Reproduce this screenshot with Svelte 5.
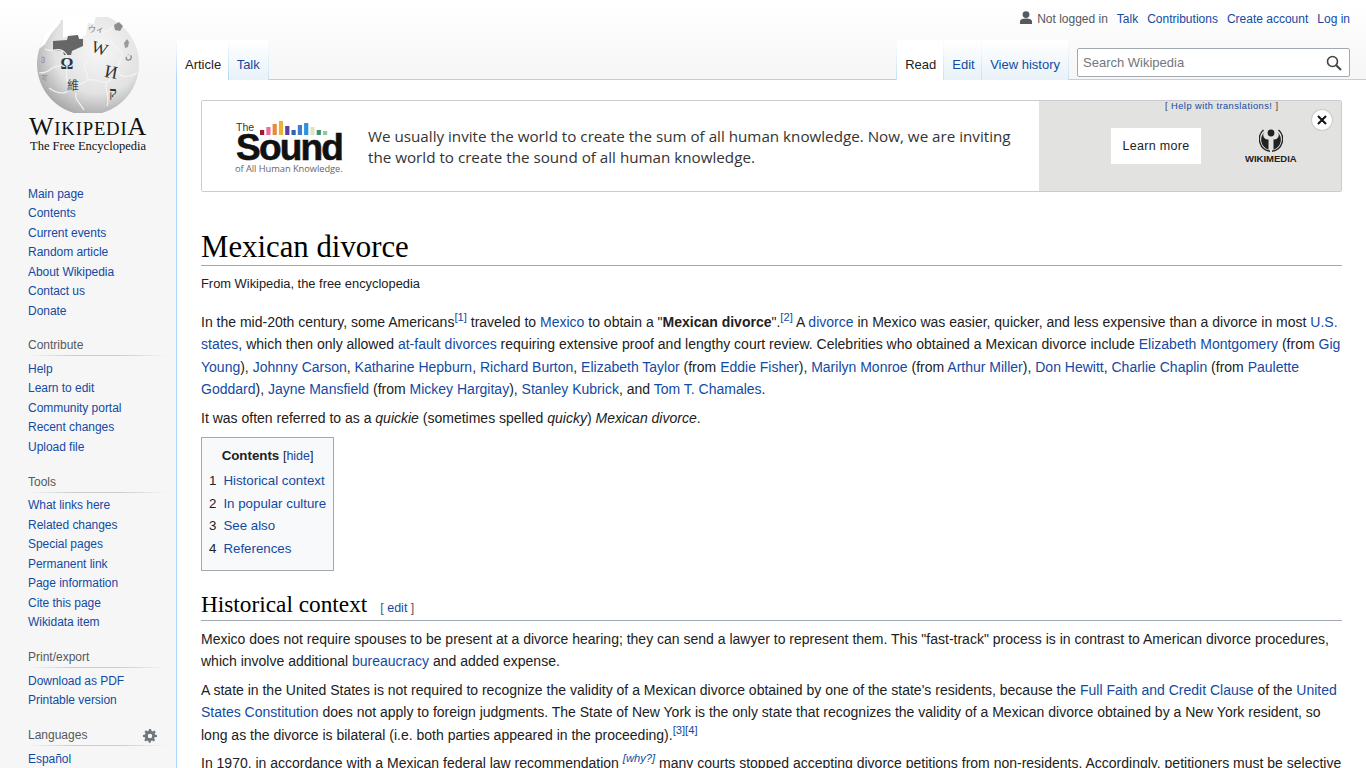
<script>
  const navs = [
    { title: '', items: ['Main page','Contents','Current events','Random article','About Wikipedia','Contact us','Donate'] },
    { title: 'Contribute', items: ['Help','Learn to edit','Community portal','Recent changes','Upload file'] },
    { title: 'Tools', items: ['What links here','Related changes','Special pages','Permanent link','Page information','Cite this page','Wikidata item'] },
    { title: 'Print/export', items: ['Download as PDF','Printable version'] },
    { title: 'Languages', gear: true, items: ['Español'] }
  ];
  const bars = [[5,'#9b1c2e'],[8,'#e76f9a'],[11,'#e98a3a'],[14,'#e9b23a'],[9,'#5b3f9e'],[5,'#3b5ea8'],[10,'#3b7fd0'],[12,'#2f8fe0'],[8,'#dfe3c8'],[5,'#3f8f6f'],[4,'#8fc9a8']];
  const toc = ['Historical context','In popular culture','See also','References'];
</script>

<div class="page">
  <aside class="side">
    <div class="logo">
      <svg class="globe" width="104" height="96" viewBox="0 0 104 96">
        <defs>
          <radialGradient id="g" cx="0.6" cy="0.36" r="0.72">
            <stop offset="0" stop-color="#f7f7f7"/><stop offset="0.6" stop-color="#e2e2e2"/><stop offset="1" stop-color="#9c9c9c"/>
          </radialGradient>
        </defs>
        <circle cx="52" cy="47" r="51" fill="url(#g)"/>
        <path d="M27 0 L60 -2 L58 7 L52 6 L50 18 L43 22 L42 18 L32 19 L27 21Z" fill="#fff"/>
        <path d="M3 32L10 16L22 3L25 5L15 17L9 27Z" fill="#fff"/>
        <path d="M17 24 L31 23 L32 19 L42 18 L43 22 L47 22 L47 29 L38 33 L36 34 L35 38 L28 38 L27 34 L17 33Z" fill="#666"/>
        <g fill="none" stroke="#f4f4f4" stroke-width="1.100">
          <path d="M49 21c8 2 4 10 8 14s-4 8-8 12 6 10 2 16-14 4-18 10"/>
          <path d="M9 32c6 4 12-2 18 2s4 8 2 12-10 2-14 6-8 4-12 4"/>
          <path d="M50 16c10 2 20 0 27-6"/>
          <path d="M74 22c2 8 10 8 12 14s-6 10-4 18 12 6 19 2"/>
          <path d="M51 63c10-2 12 4 20 2s8-10 11-11"/>
          <path d="M71 65c-4 8 4 12 0 24"/>
          <path d="M33 73c-6 6-14 2-20-2"/>
          <path d="M40 76c-2 6 4 10 8 17"/>
          <path d="M29 46c2 6 0 12 4 27"/>
        </g>
        <g font-family="Liberation Serif, serif" fill="#333" text-anchor="middle">
          <text x="31" y="52" font-size="16" font-weight="700">Ω</text>
          <text x="63" y="37" font-size="17" transform="rotate(18 63 33)">W</text>
          <text x="75" y="61" font-size="18" transform="rotate(10 75 56)">И</text>
          <text x="77" y="80" font-size="14" font-weight="700">ק</text>
          <text x="37" y="73" font-size="12" font-family="Noto Sans CJK SC, sans-serif" fill="#444">維</text>
          <text x="92" y="42" font-size="10" fill="#666">ن</text>
          <text x="7" y="44" font-size="8" fill="#888" font-family="Noto Sans CJK SC, sans-serif">ვ</text>
          <text x="8" y="64" font-size="9" fill="#888">য</text>
          <text x="60" y="15" font-size="8" fill="#777" font-family="Noto Sans CJK JP, sans-serif">ウィ</text>
        </g>
        <path d="M78 8l5-3 4 4-3 5-5-1z" fill="#666" opacity=".7"/>
        <path d="M88 26l3-4 2 3-1 5-3 1z" fill="#666" opacity=".6"/>
      </svg>
      <div class="wordmark"><span class="big">W</span>IKIPEDI<span class="big">A</span></div>
      <div class="tagline">The Free Encyclopedia</div>
    </div>
    {#each navs as nav}
      <nav class="nav" class:first={!nav.title}>
        {#if nav.title}
          <h3>{nav.title}{#if nav.gear}<svg class="gear" width="14" height="14" viewBox="0 0 20 20"><path fill="#72777d" d="M20 11.400V8.600l-2.600-.5a7.600 7.600 0 0 0-.7-1.700l1.500-2.200-2-2-2.200 1.500a7.600 7.600 0 0 0-1.700-.7L11.400 0H8.600l-.5 2.600a7.600 7.600 0 0 0-1.700.7L4.200 1.800l-2 2 1.500 2.200a7.600 7.600 0 0 0-.7 1.700L0 8.600v2.800l2.600.5c.2.600.4 1.200.7 1.700l-1.500 2.200 2 2 2.200-1.500c.5.300 1.100.5 1.700.7l.4 2.600h2.800l.5-2.600c.6-.2 1.200-.4 1.700-.7l2.200 1.500 2-2-1.500-2.200c.3-.5.5-1.100.7-1.700zM10 13.200a3.200 3.200 0 1 1 0-6.400 3.200 3.200 0 0 1 0 6.400z"/></svg>{/if}</h3>
        {/if}
        <ul>
          {#each nav.items as it}<li><a href="#x">{it}</a></li>{/each}
        </ul>
      </nav>
    {/each}
  </aside>

  <div class="main">
    <header class="head">
      <div class="personal">
        <svg class="user" width="12" height="14" viewBox="0 0 12 14"><circle cx="6" cy="3.600" r="3.400" fill="#54595d"/><path d="M0 13v-2.500C0 8.500 2 7.500 6 7.500s6 1 6 3V13z" fill="#54595d"/></svg>
        <span class="nl">Not logged in</span>
        <a href="#x">Talk</a><a href="#x">Contributions</a><a href="#x">Create account</a><a href="#x">Log in</a>
      </div>
      <div class="tabrow">
        <div class="tabs left">
          <span class="tab sel">Article</span><a class="tab" href="#x">Talk</a>
        </div>
        <div class="tabs right">
          <span class="tab sel">Read</span><a class="tab edit-tab" href="#x">Edit</a><a class="tab" href="#x">View history</a>
          <div class="search">
            <span>Search Wikipedia</span>
            <svg width="16" height="16" viewBox="0 0 16 16"><circle cx="6.500" cy="6.500" r="5" fill="none" stroke="#404244" stroke-width="1.600"/><path d="M10.200 10.200L15 15" stroke="#404244" stroke-width="2"/></svg>
          </div>
        </div>
      </div>
    </header>

    <main class="content">
      <div class="banner">
        <div class="bleft">
          <div class="sound">
            <div class="the"><span>The</span>
              <svg width="68" height="14" viewBox="0 0 68 14">{#each bars as b, i}<rect x={i*6.3} y={14-b[0]} width="4.200" height={b[0]} fill={b[1]}/>{/each}</svg>
            </div>
            <div class="snd">Sound</div>
            <div class="oahk">of All Human Knowledge.</div>
          </div>
          <p class="pitch">We usually invite the world to create the sum of all human knowledge. Now, we are inviting the world to create the sound of all human knowledge.</p>
        </div>
        <div class="bright">
          <a class="help" href="#x"><span>[</span> Help with translations! <span>]</span></a>
          <span class="learn">Learn more</span>
          <div class="wm">
            <svg width="24" height="23" viewBox="0 0 24 23">
              <circle cx="12" cy="4" r="3.400" fill="#222"/>
              <path d="M5.500 3A10.500 10.500 0 0 0 9.500 20.700V10.500A4.500 4.500 0 0 1 5.500 3Z" fill="#222"/>
              <path d="M18.500 3A10.500 10.500 0 0 1 14.500 20.700V10.500A4.500 4.500 0 0 0 18.500 3Z" fill="#222"/>
              <path d="M4 .5A13 13 0 0 0 11 23V21.500A11.500 11.500 0 0 1 5 1.500Z M20 .5A13 13 0 0 1 13 23V21.500A11.500 11.500 0 0 0 19 1.500Z" fill="#222"/>
            </svg>
            <div>WIKIMEDIA</div>
          </div>
          <span class="close"><svg width="10" height="10" viewBox="0 0 10 10"><path d="M1 1l8 8M9 1l-8 8" stroke="#111" stroke-width="2"/></svg></span>
        </div>
      </div>

      <h1>Mexican divorce</h1>
      <div class="sub">From Wikipedia, the free encyclopedia</div>

      <p class="lead">In the mid-20th century, some Americans<sup><a href="#x">[1]</a></sup> traveled to <a href="#x">Mexico</a> to obtain a "<b>Mexican divorce</b>".<sup><a href="#x">[2]</a></sup> A <a href="#x">divorce</a> in Mexico was easier, quicker, and less expensive than a divorce in most <a href="#x">U.S. states</a>, which then only allowed <a href="#x">at-fault divorces</a> requiring extensive proof and lengthy court review. Celebrities who obtained a Mexican divorce include <a href="#x">Elizabeth Montgomery</a> (from <a href="#x">Gig Young</a>), <a href="#x">Johnny Carson</a>, <a href="#x">Katharine Hepburn</a>, <a href="#x">Richard Burton</a>, <a href="#x">Elizabeth Taylor</a> (from <a href="#x">Eddie Fisher</a>), <a href="#x">Marilyn Monroe</a> (from <a href="#x">Arthur Miller</a>), <a href="#x">Don Hewitt</a>, <a href="#x">Charlie Chaplin</a> (from <a href="#x">Paulette Goddard</a>), <a href="#x">Jayne Mansfield</a> (from <a href="#x">Mickey Hargitay</a>), <a href="#x">Stanley Kubrick</a>, and <a href="#x">Tom T. Chamales</a>.</p>
      <p>It was often referred to as a <i>quickie</i> (sometimes spelled <i>quicky</i>) <i>Mexican divorce</i>.</p>

      <div class="toc">
        <div class="toct"><b>Contents</b> <span>[<a href="#x">hide</a>]</span></div>
        <ul>
          {#each toc as t, i}<li><span class="n">{i+1}</span><a href="#x">{t}</a></li>{/each}
        </ul>
      </div>

      <h2>Historical context<span class="edit">[ <a href="#x">edit</a> ]</span></h2>
      <p>Mexico does not require spouses to be present at a divorce hearing; they can send a lawyer to represent them. This "fast-track" process is in contrast to American divorce procedures, which involve additional <a href="#x">bureaucracy</a> and added expense.</p>
      <p>A state in the United States is not required to recognize the validity of a Mexican divorce obtained by one of the state's residents, because the <a href="#x">Full Faith and Credit Clause</a> of the <a href="#x">United States Constitution</a> does not apply to foreign judgments. The State of New York is the only state that recognizes the validity of a Mexican divorce obtained by a New York resident, so long as the divorce is bilateral (i.e. both parties appeared in the proceeding).<sup><a href="#x">[3]</a><a href="#x">[4]</a></sup></p>
      <p>In 1970, in accordance with a Mexican federal law recommendation <sup><i><a href="#x">[why?]</a></i></sup> many courts stopped accepting divorce petitions from non-residents. Accordingly, petitioners must be selective</p>
    </main>
  </div>
</div>

<style>
  :global(body) { margin: 0; background: #f6f6f6; font-family: "Liberation Sans", Arial, sans-serif; color: #202122; }
  a { color: #134aa3; text-decoration: none; }
  .page { display: grid; grid-template-columns: 176px 1fr; height: 768px; overflow: hidden; background: linear-gradient(#fff 0, #f6f6f6 80px) no-repeat; background-size: 100% 80px; }
  .logo { height: 160px; display: flex; flex-direction: column; align-items: center; width: 176px; }
  .globe { margin: 17px 0 0; flex: none; }
  .wordmark { font-family: "Liberation Serif", serif; font-size: 18.700px; letter-spacing: .8px; color: #111; line-height: 20px; margin-top: 4px; white-space: nowrap; }
  .wordmark .big { font-size: 26px; }
  .tagline { font-family: "Liberation Serif", serif; font-size: 12.500px; color: #111; line-height: 14px; margin-top: 0; white-space: nowrap; }
  .nav { margin: 0 9px 0 28px; font-size: 12px; padding-bottom: 15.250px; }
  .nav.first { padding-top: 24.500px; padding-bottom: 15px; }
  .nav h3 { margin: 0; font-size: 12px; font-weight: 400; color: #54595d; line-height: 19px; height: 20px; position: relative; background: linear-gradient(to right, rgba(200,204,209,0) 0, #c8ccd1 33%, #c8ccd1 66%, rgba(200,204,209,0) 100%) no-repeat bottom / 100% 1px; }
  .gear { position: absolute; right: 10px; top: 3px; }
  .nav ul { list-style: none; margin: 0; padding: 3.750px 0 0; }
  .nav.first ul { padding-top: 0; }
  .nav li { line-height: 13.500px; padding: 3px 0; height: 13.500px; white-space: nowrap; letter-spacing: -.04px; }

  .main { min-width: 0; }
  .head { height: 80px; box-sizing: border-box; position: relative; }
  .personal { display: flex; justify-content: flex-end; align-items: center; gap: 9px; font-size: 12px; padding: 10px 16px 0 0; height: 18px; }
  .personal .user { margin-right: -4px; margin-top: -3px; }
  .nl { color: #54595d; }
  .tabrow { display: flex; justify-content: space-between; position: absolute; left: 0; right: 0; top: 40px; height: 40px; box-sizing: border-box; border-bottom: 1px solid #a7d7f9; }
  .tabs { display: flex; height: 40px; }
  .tab { font-size: 13px; padding: 17px 8px 0; box-sizing: border-box; height: 40px; line-height: 15px; background: linear-gradient(#fff, #e8f2f8); border-right: 1px solid; border-image: linear-gradient(#fff, #c5e1f5) 1; white-space: nowrap; }
  .tab.sel { background: #fff; color: #202122; }
  .tabs.left .tab.sel { border-left: 1px solid; border-image: linear-gradient(#fff, #a7d7f9) 1; padding-right: 6.500px; }
  .tabs.right { padding-right: 16px; }
  .tabs.right .tab.sel { border-left: 1px solid; border-image: linear-gradient(#fff, #c5e1f5) 1; padding-right: 7px; }
  .tab.edit-tab { padding-right: 6.500px; }
  .search { width: 273px; height: 29px; box-sizing: border-box; margin: 8px 0 0 8px; border: 1px solid #a2a9b1; border-radius: 2px; background: #fff; display: flex; align-items: center; justify-content: space-between; padding: 0 7px 0 5px; font-size: 13px; color: #72777d; }

  .content { background: #fff; border-left: 1px solid #a7d7f9; padding: 20px 24px 0; height: 688px; box-sizing: border-box; overflow: hidden; font-size: 14px; line-height: 22.400px; }
  .banner { display: flex; height: 92px; box-sizing: border-box; border: 1px solid #c8ccd1; border-radius: 2px; overflow: hidden; }
  .bleft { flex: 1; display: flex; align-items: center; background: #fff; padding-left: 34px; }
  .sound { width: 107px; flex: none; color: #111; margin-top: 2px; }
  .the { display: flex; align-items: flex-end; font-size: 10.500px; line-height: 11px; color: #333; gap: 6px; height: 15px; }
  .the span { margin-bottom: 3px; }
  .the svg { flex: none; margin-bottom: 1px; }
  .snd { font-size: 37px; font-weight: 700; line-height: 27px; letter-spacing: -1.800px; -webkit-text-stroke: .6px #111; margin-top: -2px; }
  .oahk { font-size: 9.300px; color: #666; line-height: 10px; white-space: nowrap; font-family: "Open Sans", sans-serif; margin-top: 3px; margin-left: -1px; letter-spacing: -.05px; }
  .pitch { margin: 2px 0 0 25px; width: 660px; font-family: "Open Sans", sans-serif; font-size: 15.200px; line-height: 21px; color: #333; padding: 0; }
  .bright { width: 302px; flex: none; background: #e2e2e0; position: relative; display: flex; align-items: center; padding-left: 72px; box-sizing: border-box; }
  .help { position: absolute; top: 0; left: 126px; font-size: 9.300px; line-height: 10px; letter-spacing: .45px; }
  .help span { color: #444; }
  .learn { background: #fff; width: 90px; height: 36px; box-sizing: border-box; padding-top: 1px; display: flex; align-items: center; justify-content: center; font-size: 12.500px; letter-spacing: .3px; color: #222; }
  .wm { margin-left: 44px; display: flex; flex-direction: column; align-items: center; font-size: 9.500px; font-weight: 700; line-height: 9px; color: #222; margin-top: 0; gap: 2px; }
  .close { position: absolute; top: 9px; right: 9px; width: 20px; height: 20px; border-radius: 50%; background: #fff; box-shadow: 0 0 0 1px #ccc; display: flex; align-items: center; justify-content: center; }

  h1 { font-family: "Liberation Serif", serif; font-weight: 400; font-size: 30.800px; line-height: 37px; color: #000; margin: 37px 0 0; border-bottom: 1px solid #a2a9b1; height: 36px; }
  .sub { font-size: 12.880px; line-height: 17px; margin-top: 9px; }
  p { margin: 17px 0 0; }
  p.lead { margin-top: 18.800px; }
  p + p { margin-top: 6.200px; }
  sup { font-size: 11.200px; line-height: 1; vertical-align: baseline; position: relative; top: -6px; }
  .toc { display: table; border: 1px solid #a2a9b1; background: #f8f9fa; padding: 7px; box-sizing: border-box; width: 133px; height: 134px; margin-top: 8px; font-size: 13.300px; }
  .toct { text-align: center; line-height: 20px; margin-top: 1px; white-space: nowrap; font-size: 13px; }
  .toct span { font-size: 12.500px; }
  .toc b { font-size: 13.300px; }
  .toc ul { list-style: none; margin: 3.700px 0 0; padding: 0; }
  .toc li { line-height: 22.800px; white-space: nowrap; }
  .toc .n { display: inline-block; padding: 0 7px 0 0; color: #202122; }
  h2 { font-family: "Liberation Serif", serif; font-weight: 400; font-size: 23.300px; line-height: 26px; height: 28.800px; color: #000; margin: 20px 0 0; border-bottom: 1px solid #a2a9b1; }
  .edit { font-family: "Liberation Sans", sans-serif; font-size: 12.500px; margin-left: 13px; color: #54595d; }
  h2 + p { margin-top: 7px; }
</style>
